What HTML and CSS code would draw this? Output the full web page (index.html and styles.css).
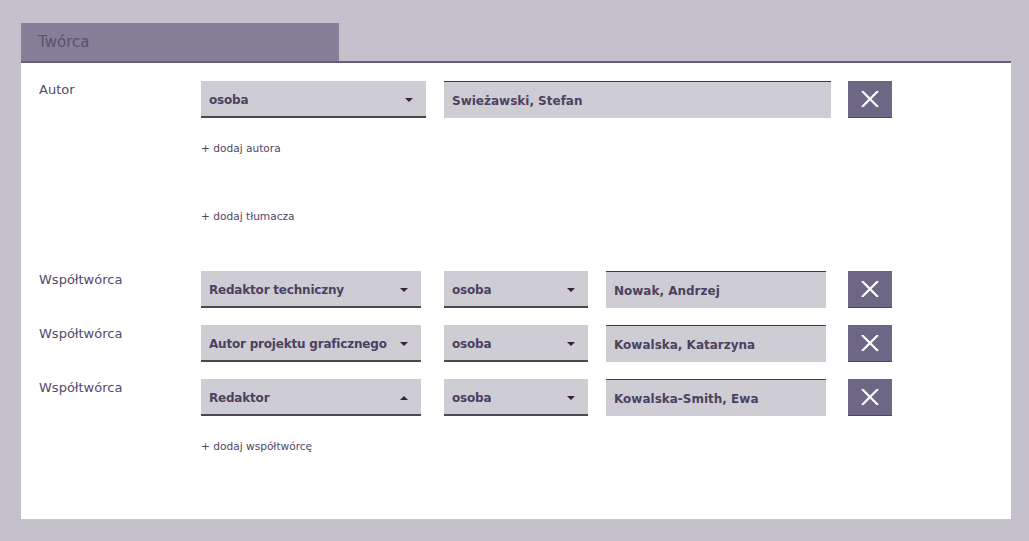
FILE: index.html
```html
<!DOCTYPE html>
<html lang="pl">
<head>
<meta charset="utf-8">
<link rel="stylesheet" href="styles.css">
</head>
<body>
<div class="page">
  <div class="tab">Twórca</div>
  <div class="panel">
    <div class="row">
      <div class="label">Autor</div>
      <div class="select w225"><span>osoba</span><i class="arrow"></i></div>
      <div class="input w387 ml18">Swieżawski, Stefan</div>
      <button class="del ml17"><svg viewBox="0 0 18 16" width="18" height="16"><path d="M1 0 L17 16 M17 0 L1 16" stroke="#fff" stroke-width="2.2" fill="none"/></svg></button>
    </div>
    <div class="add first">+ dodaj autora</div>
    <div class="add second">+ dodaj tłumacza</div>
    <div class="row r-first">
      <div class="label">Współtwórca</div>
      <div class="select w220"><span>Redaktor techniczny</span><i class="arrow"></i></div>
      <div class="select w144 ml23"><span>osoba</span><i class="arrow"></i></div>
      <div class="input w220 ml18">Nowak, Andrzej</div>
      <button class="del ml22"><svg viewBox="0 0 18 16" width="18" height="16"><path d="M1 0 L17 16 M17 0 L1 16" stroke="#fff" stroke-width="2.2" fill="none"/></svg></button>
    </div>
    <div class="row r-next">
      <div class="label">Współtwórca</div>
      <div class="select w220"><span>Autor projektu graficznego</span><i class="arrow"></i></div>
      <div class="select w144 ml23"><span>osoba</span><i class="arrow"></i></div>
      <div class="input w220 ml18">Kowalska, Katarzyna</div>
      <button class="del ml22"><svg viewBox="0 0 18 16" width="18" height="16"><path d="M1 0 L17 16 M17 0 L1 16" stroke="#fff" stroke-width="2.2" fill="none"/></svg></button>
    </div>
    <div class="row r-next">
      <div class="label">Współtwórca</div>
      <div class="select w220"><span>Redaktor</span><i class="arrow up"></i></div>
      <div class="select w144 ml23"><span>osoba</span><i class="arrow"></i></div>
      <div class="input w220 ml18">Kowalska-Smith, Ewa</div>
      <button class="del ml22"><svg viewBox="0 0 18 16" width="18" height="16"><path d="M1 0 L17 16 M17 0 L1 16" stroke="#fff" stroke-width="2.2" fill="none"/></svg></button>
    </div>
    <div class="add first">+ dodaj współtwórcę</div>
  </div>
</div>
</body>
</html>
```
FILE: styles.css
```css
* { box-sizing: border-box; }
html, body { margin: 0; padding: 0; }
body {
  background: #c4c1cc;
  font-family: "DejaVu Sans", Verdana, sans-serif;
  color: #4b4261;
  width: 1029px;
  height: 541px;
  overflow: hidden;
}
.page {
  padding: 23px 0 0 21px;
}
.tab {
  width: 318px;
  height: 38px;
  background: #857f98;
  color: #5b5171;
  font-size: 15px;
  padding: 10px 0 0 17px;
}
.panel {
  width: 990px;
  height: 458px;
  background: #fff;
  border-top: 2px solid #675e7e;
  padding: 18px 0 0 18px;
}
.row {
  display: flex;
  align-items: flex-start;
  height: 37px;
}
.r-first { margin-top: 48px; }
.r-next { margin-top: 17px; }
.label {
  width: 162px;
  font-size: 13px;
  color: #544a68;
  padding-top: 1px;
  line-height: 16px;
}
.select {
  height: 37px;
  background: #cfcdd4;
  border-bottom: 2px solid #4a474f;
  display: flex;
  align-items: center;
  justify-content: space-between;
  padding: 3px 13px 0 8px;
  font-weight: bold;
  font-size: 12px;
  letter-spacing: -0.2px;
  color: #4b4261;
}
.arrow {
  width: 0;
  height: 0;
  border-left: 4px solid transparent;
  border-right: 4px solid transparent;
  border-top: 4px solid #3a2233;
}
.arrow.up {
  border-top: 0;
  border-bottom: 4px solid #3a2233;
}
.input {
  height: 37px;
  background: #cfcdd4;
  border-top: 1px solid #3f3d44;
  padding: 2px 8px 0;
  font-weight: bold;
  font-size: 12px;
  color: #4b4261;
  display: flex;
  align-items: center;
}
.del {
  width: 44px;
  height: 37px;
  border: 0;
  padding: 0;
  background: #6e6685;
  border-bottom: 1px solid #4a474f;
  display: flex;
  align-items: center;
  justify-content: center;
}
.w225 { width: 225px; }
.w220 { width: 220px; }
.w144 { width: 144px; }
.w387 { width: 387px; }
.ml17 { margin-left: 17px; }
.ml18 { margin-left: 18px; }
.ml22 { margin-left: 22px; }
.ml23 { margin-left: 23px; }
.add {
  margin-left: 162px;
  font-size: 10.6px;
  line-height: 14px;
  color: #4f4565;
}
.add.first { margin-top: 23px; }
.add.second { margin-top: 54px; }
```
